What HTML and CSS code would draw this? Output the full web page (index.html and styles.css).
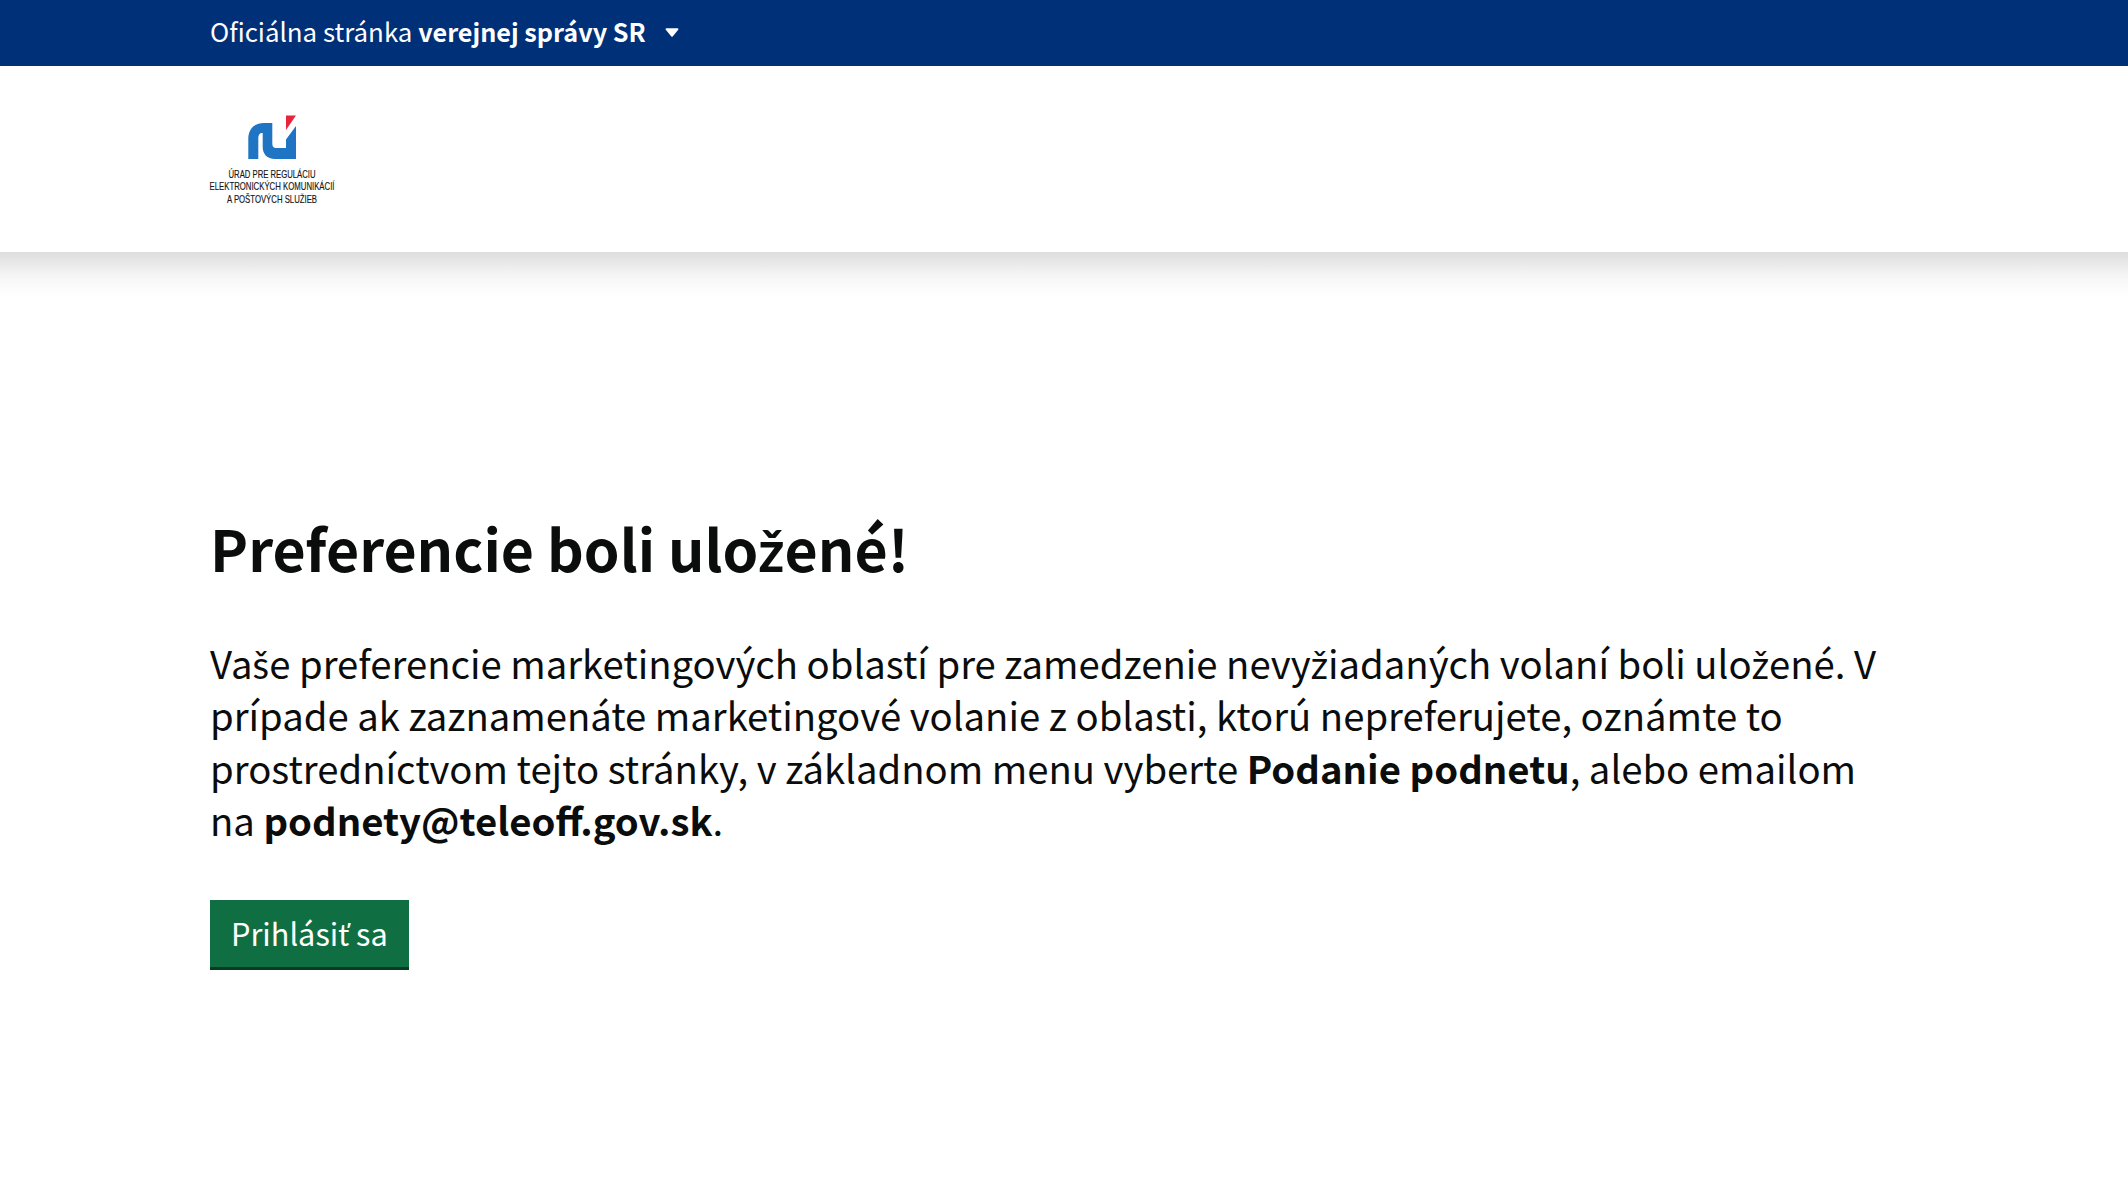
FILE: index.html
```html
<!DOCTYPE html>
<html lang="sk">
<head>
    <meta charset="UTF-8">
    <meta name="viewport" content="width=device-width, initial-scale=1.0">
    <title>Preferencie boli uložené!</title>
    <link rel="stylesheet" href="styles.css">
</head>
<body>

    <div class="gov-bar">
        <div class="container gov-bar__inner">
            <span>Oficiálna stránka <strong>verejnej správy SR</strong></span>
            <svg class="gov-bar__caret" width="14" height="9" viewBox="0 0 14 9" aria-hidden="true">
                <path d="M1.500 1.200h11L7 7.800z" fill="#fff" stroke="#fff" stroke-width="1.800" stroke-linejoin="round"/>
            </svg>
        </div>
    </div>

    <header class="site-header">
        <div class="container">
            <svg class="logo" width="210" height="100" viewBox="-40 0 210 100" role="img" aria-label="Úrad pre reguláciu elektronických komunikácií a poštových služieb">
                <path fill="#1f74c4" d="M39.300 45V25C39.300 15 45 9 55 9H63.300V30C63.300 32.500 64.800 34 67 34H77V25.500L87 12V45H66C58 45 53.700 40 53.700 33V19H53C50.500 19 49.300 21 49.300 24V45z"/>
                <path fill="#e8243c" d="M77 1.500H87L77 16z"/>
                <g class="logo__text" text-anchor="middle">
                    <text x="63" y="63.500" textLength="87" lengthAdjust="spacingAndGlyphs">ÚRAD PRE REGULÁCIU</text>
                    <text x="63" y="76" textLength="125" lengthAdjust="spacingAndGlyphs">ELEKTRONICKÝCH KOMUNIKÁCIÍ</text>
                    <text x="63" y="88.500" textLength="90" lengthAdjust="spacingAndGlyphs">A POŠTOVÝCH SLUŽIEB</text>
                </g>
            </svg>
        </div>
    </header>

    <main class="container content">
        <h1>Preferencie boli ulo<span class="ch">ž</span>ené!</h1>
        <p>Va<span class="ch">š</span>e preferencie marketingových oblastí pre zamedzenie nevy<span class="ch">ž</span>iadaných volaní boli ulo<span class="ch">ž</span>ené. V prípade ak zaznamenáte marketingové volanie z oblasti, ktorú nepreferujete, oznámte to prostredníctvom tejto stránky, v základnom menu vyberte <strong>Podanie podnetu</strong>, alebo emailom na <strong>podnety@teleoff.gov.sk</strong>.</p>
        <a class="btn" href="#">Prihlási<span class="ch">ť</span> sa</a>
    </main>

</body>
</html>
```

FILE: styles.css
```css
* {
    margin: 0;
    box-sizing: border-box;
}
body {
    font-family: "Noto Sans CJK JP", "Noto Sans", sans-serif;
    color: #0b0c0c;
    background: #fff;
}
.container {
    width: 1708px;
    margin-inline: auto;
}
/* the CJK font has no good caron letters, these few come from Lato */
.ch {
    font-family: "Lato", sans-serif;
    line-height: 0;
}
.gov-bar {
    height: 66px;
    background: #003078;
    color: #fff;
    font-size: 25.850px;
}
.gov-bar strong {
    font-size: 25.200px;
}
.gov-bar__inner {
    display: flex;
    align-items: center;
    gap: 19px;
    height: 60px;
}
.gov-bar__caret {
    margin-top: 4px;
}
.site-header {
    position: relative;
    height: 186px;
    padding-top: 48px;
    background: #fff;
}
.site-header::after {
    content: "";
    position: absolute;
    top: 100%;
    left: 0;
    right: 0;
    height: 44px;
    background: linear-gradient(#dddddd, #f4f4f4 50%, #ffffff);
}
.logo {
    display: block;
    margin-left: -41px;
}
.logo__text {
    font-family: "Liberation Sans", sans-serif;
    font-size: 10.500px;
    fill: #111;
    stroke: #222;
    stroke-width: 0.150px;
}
.content {
    padding-top: 255px;
}
h1 {
    font-size: 57.200px;
    line-height: 80px;
    font-weight: 700;
    margin-bottom: 50px;
}
p {
    width: 1680px;
    font-size: 38.280px;
    line-height: 52.400px;
    margin-bottom: 53px;
}
.btn {
    display: inline-block;
    height: 70px;
    padding: 0 21px;
    font-size: 30.700px;
    line-height: 66px;
    color: #fff;
    text-decoration: none;
    background: #0f6f43;
    border-bottom: 3px solid #0b3a22;
    box-shadow: 0 1px 0 #8a8f8c;
}
```
